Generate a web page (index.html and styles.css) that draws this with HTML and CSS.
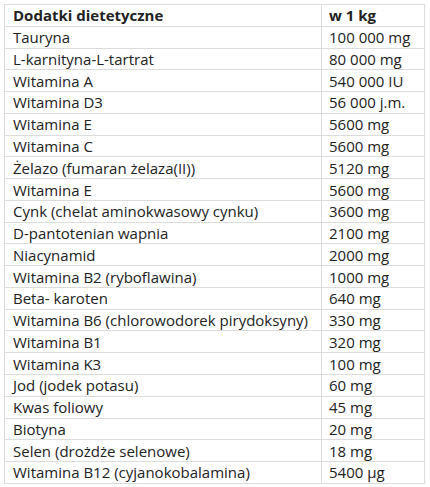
FILE: index.html
```html
<!DOCTYPE html>
<html lang="pl">
<head>
<meta charset="utf-8">
<link rel="stylesheet" href="styles.css">
</head>
<body>
<table class="supp">
  <colgroup><col class="c-name"><col class="c-val"></colgroup>
  <thead>
    <tr><th>Dodatki dietetyczne</th><th>w 1 kg</th></tr>
  </thead>
  <tbody>
    <tr><td>Tauryna</td><td>100 000 mg</td></tr>
    <tr><td>L-karnityna-L-tartrat</td><td>80 000 mg</td></tr>
    <tr><td>Witamina A</td><td>540 000 IU</td></tr>
    <tr><td>Witamina D3</td><td>56 000 j.m.</td></tr>
    <tr><td>Witamina E</td><td>5600 mg</td></tr>
    <tr><td>Witamina C</td><td>5600 mg</td></tr>
    <tr><td>Żelazo (fumaran żelaza(II))</td><td>5120 mg</td></tr>
    <tr><td>Witamina E</td><td>5600 mg</td></tr>
    <tr><td>Cynk (chelat aminokwasowy cynku)</td><td>3600 mg</td></tr>
    <tr><td>D-pantotenian wapnia</td><td>2100 mg</td></tr>
    <tr><td>Niacynamid</td><td>2000 mg</td></tr>
    <tr><td>Witamina B2 (ryboflawina)</td><td>1000 mg</td></tr>
    <tr><td>Beta- karoten</td><td>640 mg</td></tr>
    <tr><td>Witamina B6 (chlorowodorek pirydoksyny)</td><td>330 mg</td></tr>
    <tr><td>Witamina B1</td><td>320 mg</td></tr>
    <tr><td>Witamina K3</td><td>100 mg</td></tr>
    <tr><td>Jod (jodek potasu)</td><td>60 mg</td></tr>
    <tr><td>Kwas foliowy</td><td>45 mg</td></tr>
    <tr><td>Biotyna</td><td>20 mg</td></tr>
    <tr><td>Selen (drożdże selenowe)</td><td>18 mg</td></tr>
    <tr><td>Witamina B12 (cyjanokobalamina)</td><td>5400 µg</td></tr>
  </tbody>
</table>
</body>
</html>
```
FILE: styles.css
```css
html, body {
  margin: 0;
  padding: 0;
  background: #ffffff;
}
body {
  padding: 4px 0 0 4px;
  font-family: "Open Sans", "Noto Sans", sans-serif;
  color: #222;
}
.supp {
  border-collapse: collapse;
  table-layout: fixed;
  width: 420px;
  font-size: 15px;
}
.c-name {
  width: 317px;
}
.c-val {
  width: 103px;
}
.supp th,
.supp td {
  border: 1px solid #dcdcdc;
  height: 20.77px;
  padding: 0 4px 0 8px;
  text-align: left;
  white-space: nowrap;
  overflow: hidden;
  line-height: 18px;
}
.supp td + td,
.supp th + th {
  padding-left: 7px;
}
.supp th {
  font-weight: 700;
}
```
